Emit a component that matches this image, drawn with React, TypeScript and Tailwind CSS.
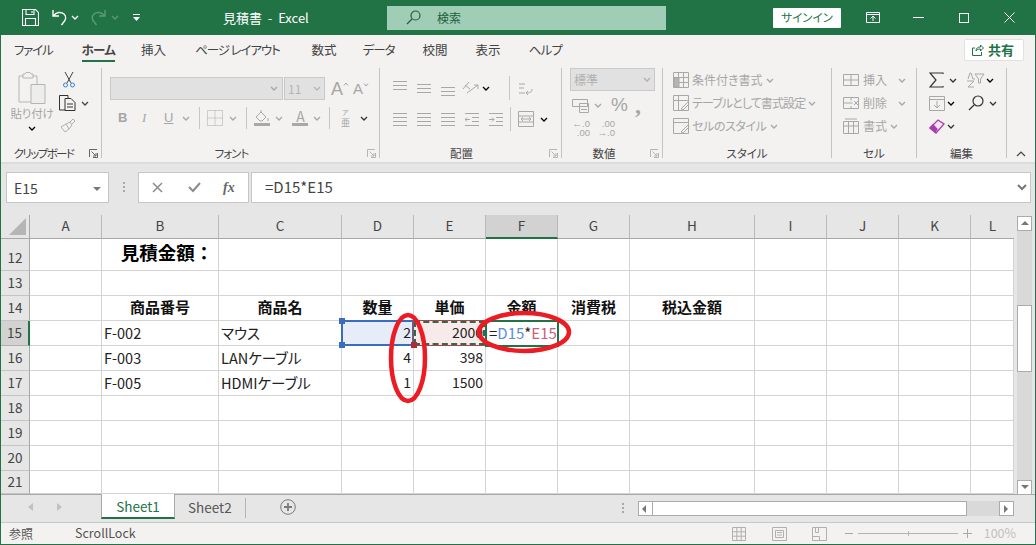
import React from 'react';

const Chev = ({ className = 'text-[#a6a6a6]' }: { className?: string }) => (
  <svg width="8" height="5" viewBox="0 0 8 5" className={`shrink-0 ${className}`} fill="none" stroke="currentColor" strokeWidth="1.3">
    <path d="M1 1l3 3 3-3" />
  </svg>
);

const Launcher = ({ dark = false, className = '' }: { dark?: boolean; className?: string }) => (
  <svg width="9" height="9" viewBox="0 0 9 9" className={`absolute top-[7px] ${className}`} fill="none" stroke={dark ? '#666' : '#b5b5b5'}>
    <path d="M.5 8V.5H8M8.5 4v4.500H4M2.500 2.500l4.500 4.500M7 4v3H4" />
  </svg>
);

const Sep = ({ className = '' }: { className?: string }) => <div className={`w-px h-[22px] bg-[#c6c6c6] ${className}`} />;

const Lines = ({ rows, arrow, className = '' }: { rows: [number, number][]; arrow?: string; className?: string }) => (
  <svg width="14" height="16" viewBox="0 0 14 16" className={`shrink-0 ${className}`} stroke="#a8a8a8" fill="none">
    {rows.map(([y, x], i) => (
      <path key={i} d={`M${x} ${y + 0.5}H14`} />
    ))}
    {arrow && <path d={arrow} />}
  </svg>
);

const CellIcon = ({ children }: { children?: React.ReactNode }) => (
  <svg width="17" height="16" viewBox="0 0 17 16" className="shrink-0" fill="none" stroke="#a8a8a8">
    {children}
  </svg>
);

const colNames = ['A', 'B', 'C', 'D', 'E', 'F', 'G', 'H', 'I', 'J', 'K', 'L'];
const rowNums = [12, 13, 14, 15, 16, 17, 18, 19, 20, 21];

const cellText: Record<string, React.ReactNode> = {
  B14: '商品番号', C14: '商品名', D14: '数量', E14: '単価', F14: '金額', G14: '消費税', H14: '税込金額',
  B15: 'F-002', C15: 'マウス', D15: '2', E15: '2000',
  B16: 'F-003', C16: 'LANケーブル', D16: '4', E16: '398',
  B17: 'F-005', C17: 'HDMIケーブル', D17: '1', E17: '1500',
};

const Cell = ({ col, row }: { col: string; row: number }) => {
  const id = `${col}${row}`;
  const v = cellText[id];
  if (id === 'B12') {
    return (
      <div className="border-r border-b border-[#d4d4d4] flex items-center justify-center pl-[14px] pb-[3px] text-[18.5px] font-bold text-black whitespace-nowrap [font-feature-settings:normal]">
        見積金額：
      </div>
    );
  }
  if (row === 14) {
    return (
      <div className="border-r border-b border-[#d4d4d4] flex items-center justify-center pb-[1px] text-[15px] font-bold text-[#111] whitespace-nowrap [font-feature-settings:normal]">
        {v}
      </div>
    );
  }
  if (id === 'D15') {
    return (
      <div className="relative bg-[#e6edf8] border-r border-b border-[#d4d4d4] flex items-center justify-end pr-[2px] pb-[1px] text-[14px] text-[#222]">
        {v}
        <div className="absolute -left-[1px] -top-[1px] -right-[1px] -bottom-[1px] border-2 border-[#3a6cc0]" />
        <div className="absolute -left-[3px] -top-[3px] w-[6px] h-[6px] bg-[#3a6cc0]" />
        <div className="absolute -left-[3px] -bottom-[3px] w-[6px] h-[6px] bg-[#3a6cc0]" />
      </div>
    );
  }
  if (id === 'E15') {
    return (
      <div className="relative bg-[#f8eaea] border-r border-b border-[#d4d4d4] flex items-center justify-end pr-[2px] pb-[1px] text-[14px] text-[#222]">
        {v}
        <div className="absolute -left-[1px] -top-[1px] -right-[1px] -bottom-[1px] border border-[#c0394b]" />
        <div className="absolute left-0 top-0 right-0 bottom-0 border-2 border-dashed border-[#217346]" />
        <div className="absolute -left-[3px] -bottom-[3px] w-[6px] h-[6px] bg-[#b02a3c]" />
      </div>
    );
  }
  if (id === 'F15') {
    return (
      <div className="relative bg-white flex items-center pl-[3px] pb-[1px] text-[15px] text-[#222] whitespace-nowrap">
        <span>=</span>
        <span className="text-[#5b8dd9]">D15</span>
        <span>*</span>
        <span className="text-[#c9607a]">E15</span>
        <div className="absolute -left-[1px] -top-[1px] -right-[1px] -bottom-[1px] border-2 border-[#217346]" />
      </div>
    );
  }
  const numeric = col === 'D' || col === 'E';
  return (
    <div className={`border-r border-b border-[#d4d4d4] flex items-center pb-[1px] text-[#222] whitespace-nowrap ${numeric ? 'text-[14px] justify-end pr-[2px]' : 'text-[14.5px] pl-[2px]'}`}>
      {v}
    </div>
  );
};

const ScrollBtn = ({ dir, className = '' }: { dir: 'up' | 'down' | 'left' | 'right'; className?: string }) => {
  const d = { up: 'M1 6L5 2l4 4z', down: 'M1 2l4 4 4-4z', left: 'M6 1L2 5l4 4z', right: 'M3 1l4 4-4 4z' }[dir];
  return (
    <div className={`bg-white border border-[#ababab] flex items-center justify-center shrink-0 ${className}`}>
      <svg width="10" height="10" viewBox="0 0 10 10" fill="#777"><path d={d} /></svg>
    </div>
  );
};

const TitleBar = () => (
  <div className="h-[35px] bg-[#217346] flex items-center text-white shrink-0">
    <svg width="17" height="17" viewBox="0 0 17 17" fill="none" stroke="white" strokeWidth="1.1" className="ml-[21px]">
      <path d="M.5.500h13l3 3v13H.5zM4 .5v5h8v-5M3.500 16.500v-7h10v7M10 2v2" />
    </svg>
    <svg width="16" height="17" viewBox="0 0 16 17" fill="none" stroke="white" strokeWidth="1.4" className="ml-[12px]">
      <path d="M2 1v6h6M2.500 7C5 3 10 2.500 13 5c2.500 2.500 2 6-1 9l-1.500 2" />
    </svg>
    <Chev className="ml-[4px] text-white" />
    <svg width="16" height="17" viewBox="0 0 16 17" fill="none" stroke="#5c9a7a" strokeWidth="1.4" className="ml-[12px]">
      <path d="M14 1v6H8M13.500 7C11 3 6 2.500 3 5c-2.500 2.500-2 6 1 9l1.500 2" />
    </svg>
    <Chev className="ml-[4px] text-[#5c9a7a]" />
    <svg width="9" height="8" viewBox="0 0 9 8" fill="white" className="ml-[13px]">
      <path d="M1 0h7v1H1zM1 3h7L4.500 7z" />
    </svg>
    <div className="w-[88px] ml-[82px] text-[13px] whitespace-nowrap">見積書 &nbsp;-&nbsp; Excel</div>
    <div className="ml-[76px] w-[279px] h-[24px] bg-[#a0cdb5] flex items-center">
      <svg width="15" height="15" viewBox="0 0 15 15" fill="none" stroke="#1f5f3d" strokeWidth="1.2" className="ml-[19px]">
        <circle cx="9.500" cy="5.500" r="4.500" />
        <path d="M6 9l-5 5" />
      </svg>
      <span className="ml-[16px] text-[12px] text-[#1f5f3d]">検索</span>
    </div>
    <div className="ml-[107px] w-[68px] h-[20px] bg-white rounded-[1px] flex items-center justify-center text-[11.5px] text-[#217346]">サインイン</div>
    <svg width="14" height="11" viewBox="0 0 14 11" fill="none" stroke="white" className="ml-[25px]">
      <path d="M.5.500h13v10H.5zM.5 2.500h13M7 9V4.500M4.500 6.500L7 4l2.500 2.500" />
    </svg>
    <div className="ml-[33px] w-[11px] h-px bg-white" />
    <div className="ml-[35px] w-[10px] h-[10px] border border-white" />
    <svg width="11" height="11" viewBox="0 0 11 11" stroke="white" className="ml-[35px]">
      <path d="M.5.500l10 10M10.500.500l-10 10" />
    </svg>
  </div>
);

const Tabs = () => {
  const tabs: [string, string][] = [
    ['ファイル', 'ml-[13px] tracking-[-1.2px]'],
    ['ホーム', 'ml-[29px] tracking-[-0.7px]'],
    ['挿入', 'ml-[26px]'],
    ['ページ レイアウト', 'ml-[29px] tracking-[-1.1px]'],
    ['数式', 'ml-[32px]'],
    ['データ', 'ml-[26px] tracking-[-1px]'],
    ['校閲', 'ml-[28px]'],
    ['表示', 'ml-[28px]'],
    ['ヘルプ', 'ml-[28px] tracking-[-0.7px]'],
  ];
  return (
    <div className="h-[31px] flex items-start shrink-0 relative">
      {tabs.map(([t, m]) => (
        <div key={t} className={`${m} h-[27px] pt-[6px] text-[12.5px] leading-[18px] text-[#444] whitespace-nowrap ${t === 'ホーム' ? 'font-bold text-[#222] border-b-[2px] border-[#217346]' : ''}`}>
          {t}
        </div>
      ))}
      <div className="absolute right-[11px] top-[4px] w-[60px] h-[22px] bg-white border border-[#e1e1e1] rounded-[2px] flex items-center pl-[7px] text-[#217346]">
        <svg width="12" height="12" viewBox="0 0 12 12" fill="none" stroke="#217346">
          <path d="M3 4H.5v7.500h9V8M4 7c0-3 2-4 4.500-4V1L11.500 4 8.500 7V5C6 5 5 5.500 4 7z" />
        </svg>
        <span className="ml-[4px] text-[13px] font-bold">共有</span>
      </div>
    </div>
  );
};

const Group = ({ label, width, labelClass = '', launcher, dark, children }: { label: string; width: string; labelClass?: string; launcher?: string; dark?: boolean; children: React.ReactNode }) => (
  <div className={`${width} shrink-0 h-[90px] flex flex-col border-r border-[#c4c4c4]`}>
    <div className="h-[74px] relative">{children}</div>
    <div className={`relative h-[16px] text-center text-[11.5px] leading-[22px] text-[#444] whitespace-nowrap ${labelClass}`}>
      {label}
      {launcher && <Launcher dark={dark} className={launcher} />}
    </div>
  </div>
);

const Ribbon = () => (
  <div className="h-[96px] flex items-start shrink-0 pt-[2px] relative">
    <Group label="クリップボード" width="w-[101px]" labelClass="pr-[15px] tracking-[-1.6px]" launcher="right-[3px]" dark>
      <div className="flex h-full">
        <div className="ml-[11px] w-[40px] flex flex-col items-center pt-[4px]">
          <svg width="28" height="32" viewBox="0 0 28 32" fill="none" stroke="#b5b5b5">
            <path d="M5 4H1v26h12M19 12V4h-4M5 2h2l1-1.500h4L13 2h2v4H5z" />
            <path d="M13 12.500h14v19H13z" fill="#ededed" />
          </svg>
          <div className="mt-[1px] text-[11.5px] leading-[16px] text-[#a6a6a6] whitespace-nowrap tracking-[-0.2px]">貼り付け</div>
          <Chev className="mt-[5px]" />
        </div>
        <div className="ml-[7px] flex flex-col">
          <svg width="12" height="17" viewBox="0 0 12 17" fill="none" className="ml-[4px] mt-[3px]">
            <path d="M2 1l6 11M10 1L4 12" stroke="#444" />
            <circle cx="2.500" cy="14" r="2" stroke="#2e86d6" />
            <circle cx="9.500" cy="14" r="2" stroke="#2e86d6" />
          </svg>
          <div className="flex items-center mt-[7px]">
            <svg width="17" height="16" viewBox="0 0 17 16" fill="none" stroke="#333">
              <path d="M6 15H.5V.5H9V3M6 3.500h6l4 4V15.500H6zM8 9h6M8 12h6" />
            </svg>
            <Chev className="ml-[5px] text-[#444]" />
          </div>
          <svg width="16" height="15" viewBox="0 0 16 15" fill="none" stroke="#b0b0b0" className="mt-[7px] ml-[1px]">
            <path d="M1 9l5-3 3 5-4 3zM6 6l4-2 2 3-3 4M10 4l3-3 2 2-3 3" />
          </svg>
        </div>
      </div>
    </Group>
    <Group label="フォント" width="w-[278px]" labelClass="pr-[18px] tracking-[-1px]" launcher="right-[3px]">
      <div className="flex items-center pt-[9px] pl-[8px]">
        <div className="w-[173px] h-[23px] bg-[#e1e1e1] border border-[#c9c9c9] flex items-center justify-end pr-[4px]"><Chev /></div>
        <div className="ml-[1px] w-[41px] h-[23px] bg-[#e1e1e1] border border-[#c9c9c9] flex items-center pl-[3px] text-[12px] text-[#b5b5b5]">
          11<Chev className="ml-auto mr-[3px]" />
        </div>
        <span className="ml-[6px] text-[18px] leading-[20px] text-[#a6a6a6] font-['Liberation_Sans',sans-serif]">A</span>
        <svg width="6" height="4" viewBox="0 0 6 4" fill="none" stroke="#a6a6a6" className="mb-[10px]"><path d="M1 3.500L3 1l2 2.500" /></svg>
        <span className="ml-[4px] text-[15px] leading-[20px] text-[#a6a6a6] font-['Liberation_Sans',sans-serif]">A</span>
        <svg width="6" height="4" viewBox="0 0 6 4" fill="none" stroke="#a6a6a6" className="mb-[8px]"><path d="M1 .5L3 3l2-2.500" /></svg>
      </div>
      <div className="flex items-center mt-[7px] h-[22px] text-[#a6a6a6]">
        <span className="ml-[16px] w-[10px] font-bold text-[13px] font-['Liberation_Sans',sans-serif]">B</span>
        <span className="ml-[14px] w-[10px] italic text-[13px] font-['Liberation_Serif',serif]">I</span>
        <span className="ml-[12px] underline text-[13px] font-['Liberation_Sans',sans-serif]">U</span>
        <Chev className="ml-[9px]" />
        <Sep className="ml-[9px]" />
        <svg width="16" height="16" viewBox="0 0 16 16" fill="none" stroke="#a8a8a8" strokeDasharray="1 1" className="ml-[7px]">
          <path d="M.5.500h15v15H.5zM.5 8h15M8 .5v15" />
        </svg>
        <Chev className="ml-[6px]" />
        <Sep className="ml-[9px]" />
        <div className="ml-[7px] flex flex-col items-center">
          <svg width="16" height="12" viewBox="0 0 16 12" fill="none" stroke="#a8a8a8"><path d="M2 7l5-5 5 5-4 4H6zM7 2V0M14 8v3" /></svg>
          <div className="w-[16px] h-[3px] mt-[1px] bg-[#a8a8a8]" />
        </div>
        <Chev className="ml-[5px]" />
        <div className="ml-[9px] flex flex-col items-center">
          <span className="text-[14px] leading-[12px]">A</span>
          <div className="w-[16px] h-[3px] mt-[1px] bg-[#a8a8a8]" />
        </div>
        <Chev className="ml-[5px]" />
        <Sep className="ml-[8px]" />
        <div className="ml-[9px] w-[12px] flex flex-col items-center">
          <span className="text-[7px] leading-[9px]">ア</span>
          <span className="text-[9px] leading-[11px]">亜</span>
        </div>
        <Chev className="ml-[9px] text-[#333]" />
      </div>
    </Group>
    <Group label="配置" width="w-[182px]" labelClass="pr-[18px]" launcher="right-[3px]">
      <div className="flex items-center pt-[7px] h-[33px]">
        <Lines rows={[[1, 0], [5, 0], [9, 0]]} className="ml-[13px]" />
        <Lines rows={[[4, 0], [8, 0], [12, 0]]} className="ml-[10px]" />
        <Lines rows={[[7, 0], [11, 0], [15, 0]]} className="ml-[10px]" />
        <svg width="17" height="16" viewBox="0 0 17 16" fill="none" stroke="#a8a8a8" className="ml-[7px]">
          <path d="M1 9l6-7M3 5l5 4M5 13L16 5M12 5h4v4" />
        </svg>
        <Chev className="ml-[3px]" />
        <Sep className="ml-[19px] h-[24px]" />
        <svg width="16" height="18" viewBox="0 0 16 18" fill="none" stroke="#a8a8a8" className="ml-[8px]">
          <path d="M1 5h6M1 9h5M1 14h6M14 10c0 3-2 4-6 4M8 14l2-2M8 14l2 2" />
        </svg>
      </div>
      <div className="flex items-center mt-[6px] h-[24px]">
        <Lines rows={[[2, 0], [6, 0], [10, 0], [14, 0]]} className="ml-[13px]" />
        <Lines rows={[[2, 0], [6, 0], [10, 0], [14, 0]]} className="ml-[10px]" />
        <Lines rows={[[2, 0], [6, 0], [10, 0], [14, 0]]} className="ml-[10px]" />
        <Lines rows={[[2, 0], [6, 7], [10, 7], [14, 0]]} arrow="M5 8.500H0M0 8.500l2-2M0 8.500l2 2" className="ml-[10px]" />
        <Lines rows={[[2, 0], [6, 7], [10, 7], [14, 0]]} arrow="M0 8.500h5M5 8.500l-2-2M5 8.500l-2 2" className="ml-[10px]" />
        <Sep className="ml-[7px] h-[24px]" />
        <svg width="16" height="16" viewBox="0 0 16 16" fill="none" stroke="#a8a8a8" className="ml-[7px]">
          <path d="M.5.500h15v15H.5zM.5 5h15M.5 11h15M3 8h10M3 8l2-2M3 8l2 2M13 8l-2-2M13 8l-2 2" />
        </svg>
        <Chev className="ml-[6px]" />
      </div>
    </Group>
    <Group label="数値" width="w-[101px]" labelClass="pr-[16px]" launcher="right-[3px]">
      <div className="ml-[8px] w-[85px] h-[23px] bg-[#e1e1e1] border border-[#c9c9c9] flex items-center pl-[3px] text-[12px] text-[#b0b0b0]">
        標準<Chev className="ml-auto mr-[3px]" />
      </div>
      <div className="flex items-center mt-[2px] h-[24px] text-[#a6a6a6]">
        <svg width="17" height="15" viewBox="0 0 17 15" fill="none" stroke="#a8a8a8" className="ml-[10px]">
          <path d="M.5 1.500h15v7H.5zM7.500 5.500h9v9h-9zM9 8.500h6M9 11.500h6" />
        </svg>
        <Chev className="ml-[5px]" />
        <span className="ml-[9px] text-[19px] leading-[20px] font-['Liberation_Sans',sans-serif]">%</span>
        <span className="ml-[7px] font-bold text-[24px] leading-[16px] font-['Liberation_Serif',serif]">,</span>
      </div>
      <div className="flex items-center h-[22px] text-[#a6a6a6] text-[9.5px] leading-[9px] font-['Liberation_Sans',sans-serif]">
        <div className="ml-[9px] w-[19px] text-right">←.0<br />.00</div>
        <div className="ml-[6px] w-[19px] text-right">.00<br />→.0</div>
      </div>
    </Group>
    <Group label="スタイル" width="w-[169px]">
      <div className="flex flex-col gap-[7px] pt-[4px] pl-[10px] text-[12px] leading-[16px] text-[#a6a6a6] whitespace-nowrap">
        <div className="flex items-center h-[16px]">
          <CellIcon><path d="M.5.500h15v15H.5zM.5 5.500h15M.5 10.500h15M5.500.5v15M10.500.5v15" /><path d="M1 6h5v9H1z" fill="#b5b5b5" /></CellIcon>
          <span className="ml-[2px]">条件付き書式</span><Chev className="ml-[3px]" />
        </div>
        <div className="flex items-center h-[16px]">
          <CellIcon><path d="M.5.500h15v15H.5zM.5 5.500h15M5.500.5v15M8 14l7-7 1 2-6 6z" /></CellIcon>
          <span className="ml-[2px] tracking-[-0.9px]">テーブルとして書式設定</span><Chev className="ml-[3px]" />
        </div>
        <div className="flex items-center h-[16px]">
          <CellIcon><path d="M.5.500h15v15H.5zM.5 4.500h15M8 14l7-7 1 2-6 6z" /></CellIcon>
          <span className="ml-[2px] tracking-[-0.4px]">セルのスタイル</span><Chev className="ml-[3px]" />
        </div>
      </div>
    </Group>
    <Group label="セル" width="w-[85px]">
      <div className="flex flex-col gap-[7px] pt-[4px] pl-[11px] text-[12px] leading-[16px] text-[#a6a6a6] whitespace-nowrap">
        <div className="flex items-center h-[16px]">
          <CellIcon><path d="M.5 2.500h15v11H.5zM.5 8h15M8 2.500v11" /></CellIcon>
          <span className="ml-[3px] w-[30px]">挿入</span><Chev className="ml-[5px]" />
        </div>
        <div className="flex items-center h-[16px]">
          <CellIcon><path d="M.5 2.500h15v11H.5zM.5 8h9M8 2.500v3M8 11v2.500M11 6l4 4M15 6l-4 4" /></CellIcon>
          <span className="ml-[3px] w-[30px]">削除</span><Chev className="ml-[5px]" />
        </div>
        <div className="flex items-center h-[16px]">
          <CellIcon><path d="M.5 3.500h15v12H.5zM.5 8h15M5.500 3.500v12M10.500 3.500v12M2 1h12" /></CellIcon>
          <span className="ml-[3px]">書式</span><Chev className="ml-[3px]" />
        </div>
      </div>
    </Group>
    <Group label="編集" width="w-[90px]">
      <div className="flex flex-col gap-[7px] pt-[4px] pl-[12px]">
        <div className="flex items-center h-[16px]">
          <svg width="15" height="16" viewBox="0 0 15 16" fill="none" stroke="#333" strokeWidth="1.200"><path d="M14 2V1H1l6 7-6 7h13v-1" /></svg>
          <Chev className="ml-[5px] text-[#333]" />
          <svg width="19" height="16" viewBox="0 0 19 16" fill="none" stroke="#a8a8a8" className="ml-[9px]">
            <path d="M9 7H7L5 1H4L2 7M1 9h7L2 15h6M9 2h9l-3.500 5v4h-2V7z" />
          </svg>
          <Chev className="ml-[1px]" />
        </div>
        <div className="flex items-center h-[16px]">
          <svg width="16" height="15" viewBox="0 0 16 15" fill="none" stroke="#a8a8a8"><path d="M.5.500h15v14H.5zM.5 3.500h15M8 5v7M5 9l3 3 3-3" /></svg>
          <Chev className="ml-[2px]" />
          <svg width="16" height="16" viewBox="0 0 16 16" fill="none" stroke="#333" strokeWidth="1.200" className="ml-[13px]"><circle cx="10" cy="6" r="5" /><path d="M6 10l-5 5" /></svg>
          <Chev className="ml-[5px] text-[#333]" />
        </div>
        <div className="flex items-center h-[16px]">
          <svg width="16" height="15" viewBox="0 0 16 15" fill="#f6e6f6" stroke="#a93cb0" strokeWidth="1.300"><path d="M1 9l8-8 6 4-8 9z" /><path d="M1 9l3-3 4 4-2 3z" fill="#a93cb0" /></svg>
          <Chev className="ml-[2px] text-[#333]" />
        </div>
      </div>
    </Group>
    <svg width="10" height="6" viewBox="0 0 10 6" fill="none" stroke="#444" strokeWidth="1.200" className="absolute right-[9px] bottom-[5px]"><path d="M1 5l4-4 4 4" /></svg>
  </div>
);

const FormulaBar = () => (
  <div className="h-[53px] flex items-start shrink-0 bg-[#e6e6e6] pt-[8px] border-t-[2px] border-[#dcdcdc]">
    <div className="ml-[5px] w-[103px] h-[31px] bg-white border border-[#c6c6c6] flex items-center pl-[7px] pt-[2px] text-[14px] text-[#444]">
      E15
      <svg width="8" height="4" viewBox="0 0 8 4" fill="#777" className="ml-auto mr-[7px]"><path d="M0 0h8L4 4z" /></svg>
    </div>
    <div className="ml-[14px] mt-[10px] w-[2px] h-[10px] border-l-2 border-dotted border-[#a8a8a8]" />
    <div className="ml-[13px] w-[111px] h-[31px] bg-white border border-[#c6c6c6] flex items-center">
      <svg width="11" height="11" viewBox="0 0 11 11" stroke="#8c8c8c" strokeWidth="1.500" className="ml-[13px]"><path d="M1 1l9 9M10 1l-9 9" /></svg>
      <svg width="13" height="11" viewBox="0 0 13 11" fill="none" stroke="#8c8c8c" strokeWidth="2" className="ml-[25px]"><path d="M1 5l4 4 7-8" /></svg>
      <span className="ml-[22px] text-[14px] italic font-bold text-[#666] font-['Liberation_Serif',serif]">fx</span>
    </div>
    <div className="ml-[2px] w-[780px] h-[31px] bg-white border border-[#c6c6c6] flex items-center pl-[13px] text-[15px] text-[#444]">
      =D15*E15
      <svg width="10" height="7" viewBox="0 0 10 7" fill="none" stroke="#777" strokeWidth="2" className="ml-auto mr-[3px]"><path d="M1 1l4 4 4-4" /></svg>
    </div>
  </div>
);

const Sheet = () => (
  <div className="relative flex flex-1 min-h-0 bg-[#e6e6e6]">
    <div className="box-content w-[1012px] border-r border-[#a8a8a8] grid grid-cols-[29px_72px_117px_123px_72px_72px_72px_72px_125px_72px_72px_72px_43px] grid-rows-[24px_32px_25px_25px_25px_25px_25px_25px_25px_25px_23px] bg-white">
      <div className="bg-[#e6e6e6] border-r border-b border-[#a8a8a8] relative overflow-hidden">
        <div className="absolute right-[3px] bottom-[3px] w-0 h-0 border-l-[17px] border-l-transparent border-b-[17px] border-b-[#b5b5b5]" />
      </div>
      {colNames.map((c) => (
        <div key={c} className={`flex items-center justify-center text-[13.5px] text-[#444] pb-[2px] ${c === 'F' ? 'bg-[#d2d2d2] border-b-[2px] border-[#217346]' : 'bg-[#e6e6e6] border-b border-[#a8a8a8]'} ${c === 'L' ? '' : 'border-r border-r-[#b9b9b9]'}`}>
          {c}
        </div>
      ))}
      {rowNums.map((r) => (
        <React.Fragment key={r}>
          <div className={`flex items-center justify-center text-[13.5px] text-[#444] ${r === 12 ? 'pt-[6px]' : 'pb-[1px]'} ${r === 15 ? 'bg-[#d2d2d2] border-r-[2px] border-r-[#217346] border-b border-b-[#b0b0b0]' : 'bg-[#e6e6e6] border-r border-r-[#a8a8a8] border-b border-b-[#c4c4c4]'}`}>
            {r}
          </div>
          {colNames.map((c) => (
            <Cell key={c} col={c} row={r} />
          ))}
        </React.Fragment>
      ))}
    </div>
    <div className="ml-[3px] w-[15px] h-[279px] mt-[1px] flex flex-col bg-[#d9d9d9]">
      <ScrollBtn dir="up" className="h-[15px]" />
      <div className="h-[74px]" />
      <div className="h-[67px] bg-white border border-[#ababab]" />
      <div className="flex-1" />
      <ScrollBtn dir="down" className="h-[15px]" />
    </div>
    {/* red hand-drawn circles */}
    <svg width="200" height="110" viewBox="0 0 200 110" className="absolute left-[375px] top-[90px]" fill="none" stroke="#ec1c24" strokeWidth="4.500">
      <ellipse cx="32" cy="53" rx="17" ry="43" />
      <ellipse cx="148" cy="27" rx="45" ry="19" />
    </svg>
  </div>
);

const SheetTabs = () => (
  <div className="h-[29px] bg-[#e6e6e6] border-t border-t-[#a8a8a8] border-b border-b-[#c8c8c8] flex items-start shrink-0">
    <svg width="5" height="8" viewBox="0 0 5 8" fill="#c0c0c0" className="ml-[27px] mt-[8px]"><path d="M5 0L0 4l5 4z" /></svg>
    <svg width="5" height="8" viewBox="0 0 5 8" fill="#c0c0c0" className="ml-[24px] mt-[8px]"><path d="M0 0l5 4-5 4z" /></svg>
    <div className="ml-[39px] -mt-[1px] w-[74px] h-[25px] pt-[1px] bg-white border-x border-[#a8a8a8] border-b-[2px] border-b-[#217346] flex items-center justify-center text-[13.5px] text-[#217346]">Sheet1</div>
    <div className="ml-[13px] h-[24px] flex items-center text-[13.5px] text-[#555]">Sheet2</div>
    <div className="ml-[13px] mt-[3px] w-px h-[20px] bg-[#b5b5b5]" />
    <svg width="16" height="16" viewBox="0 0 16 16" fill="none" stroke="#7a7a7a" className="ml-[34px] mt-[4px]">
      <circle cx="8" cy="8" r="7.300" />
      <path d="M4 8h8M8 4v8" strokeWidth="1.800" />
    </svg>
    <div className="ml-[326px] mt-[8px] w-[2px] h-[10px] border-l-2 border-dotted border-[#a8a8a8]" />
    <div className="ml-[14px] mt-[6px] w-[376px] h-[15px] flex">
      <ScrollBtn dir="left" className="w-[15px] h-[15px]" />
      <div className="w-[314px] h-[15px] bg-white border-y border-r border-[#ababab]" />
      <div className="flex-1 bg-[#d9d9d9]" />
      <ScrollBtn dir="right" className="w-[15px] h-[15px]" />
    </div>
  </div>
);

const StatusBar = () => (
  <div className="h-[21px] bg-[#f3f2f1] flex items-center shrink-0 text-[12px] text-[#555]">
    <span className="ml-[8px]">参照</span>
    <span className="ml-[42px] text-[12.5px]">ScrollLock</span>
    <svg width="14" height="14" viewBox="0 0 14 14" fill="none" stroke="#b0b0b0" className="ml-[596px]">
      <path d="M.5.500h13v13H.5zM.5 4.800h13M.5 9.200h13M4.800.5v13M9.200.5v13" />
    </svg>
    <svg width="15" height="14" viewBox="0 0 15 14" fill="none" stroke="#b0b0b0" className="ml-[26px]">
      <path d="M.5.500h14v13H.5zM3.500 3.500h8v7h-8zM5 5.500h5M5 8h5" />
    </svg>
    <svg width="15" height="14" viewBox="0 0 15 14" fill="none" stroke="#b0b0b0" className="ml-[25px]">
      <path d="M.5.500h14v13H.5zM3.500.5v5h3v-5M.5 9.500h7v4" />
    </svg>
    <div className="ml-[18px] w-[8px] h-px bg-[#a8a8a8]" />
    <div className="relative ml-[5px] w-[100px] h-px bg-[#b5b5b5]">
      <div className="absolute left-1/2 -top-[2px] w-px h-[5px] bg-[#b5b5b5]" />
    </div>
    <svg width="9" height="9" viewBox="0 0 9 9" stroke="#a8a8a8" className="ml-[5px]"><path d="M0 4.500h9M4.500 0v9" /></svg>
    <span className="ml-[12px] text-[12.5px] text-[#c0c0c0]">100%</span>
  </div>
);

export default function App() {
  return (
    <div className="w-[1036px] h-[545px] flex flex-col overflow-hidden bg-[#f3f2f1] border-x border-b border-[#217346] font-['Noto_Sans_CJK_JP','Liberation_Sans',sans-serif] [font-feature-settings:'palt']">
      <TitleBar />
      <Tabs />
      <Ribbon />
      <FormulaBar />
      <Sheet />
      <SheetTabs />
      <StatusBar />
    </div>
  );
}
